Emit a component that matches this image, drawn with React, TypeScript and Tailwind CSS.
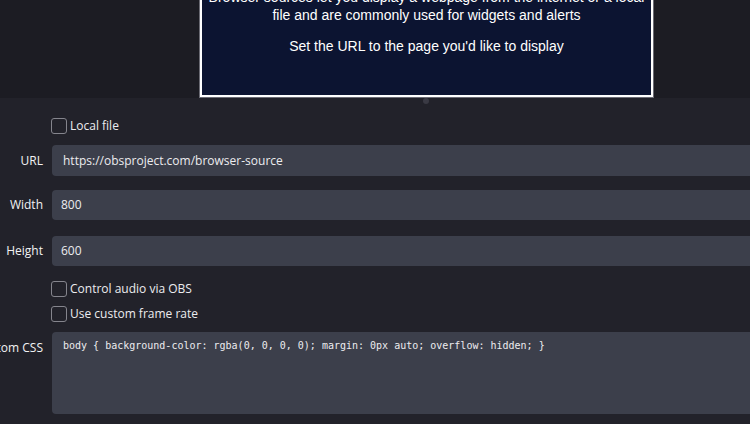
import React from "react";

const sans = { fontFamily: '"Open Sans", "Noto Sans", sans-serif' };

function Checkbox({ label }: { label: string }) {
  return (
    <label className="flex h-4 items-center gap-[3px] pl-[51px]">
      <span className="block h-4 w-4 rounded-[3px] border-[1.5px] border-[#85858d] bg-transparent" />
      <span className="text-[12px] leading-4 text-[#ececef]">{label}</span>
    </label>
  );
}

function Field({ label, value, className, pad }: { label: string; value: string; className: string; pad: string }) {
  return (
    <div className={`flex items-center ${className}`}>
      <div className="flex w-[43px] shrink-0 justify-end whitespace-nowrap text-[12px] text-[#f2f2f4]">{label}</div>
      <div className={`ml-[9px] -mr-4 flex h-full flex-1 items-center rounded-[4px] bg-[#3c3f4b] text-[12px] text-[#ececef] ${pad}`}>
        {value}
      </div>
    </div>
  );
}

export default function App() {
  return (
    <div className="h-[424px] w-[750px] overflow-hidden bg-[#22222a]" style={sans}>
      {/* preview area */}
      <div className="h-[98px] bg-[#1c1c23]">
        <div className="ml-[200px] h-[97px] w-[453px] overflow-hidden border-2 border-t-0 border-white bg-[#0c1431] shadow-[0_0_0_1px_#6b6b74]">
          <div
            className="-mt-[12px] whitespace-nowrap text-center text-[14px] leading-[18px] text-white"
            style={{ fontFamily: '"Liberation Sans", Arial, sans-serif' }}
          >
            <p>
              Browser sources let you display a webpage from the internet or a local
              <br />
              file and are commonly used for widgets and alerts
            </p>
            <p className="mt-[13px]">Set the URL to the page you'd like to display</p>
          </div>
        </div>
      </div>

      {/* splitter handle */}
      <div className="h-[6px]">
        <div className="ml-[423px] h-[6px] w-[6px] rounded-full bg-[#3a3a44]" />
      </div>

      {/* properties */}
      <div className="flex flex-col">
        <div className="mt-[14px]">
          <Checkbox label="Local file" />
        </div>
        <Field label="URL" value="https://obsproject.com/browser-source" className="mt-[11px] h-[31px]" pad="pl-[11px]" />
        <Field label="Width" value="800" className="mt-[14px] h-[30px]" pad="pl-[9px]" />
        <Field label="Height" value="600" className="mt-[16px] h-[30px]" pad="pl-[9px]" />
        <div className="mt-[15px]">
          <Checkbox label="Control audio via OBS" />
        </div>
        <div className="mt-[9px]">
          <Checkbox label="Use custom frame rate" />
        </div>
        <div className="mt-[10px] flex h-[82px] items-start">
          <div className="mt-[7px] flex w-[43px] shrink-0 justify-end whitespace-nowrap text-[12px] text-[#f2f2f4]">Custom CSS</div>
          <div
            className="ml-[9px] -mr-4 h-full flex-1 rounded-[4px] bg-[#3c3f4b] pl-[11px] pt-[7px] text-[10px] leading-[14px] text-[#ececef]"
            style={{ fontFamily: '"DejaVu Sans Mono", monospace' }}
          >
            body {"{"} background-color: rgba(0, 0, 0, 0); margin: 0px auto; overflow: hidden; {"}"}
          </div>
        </div>
      </div>
    </div>
  );
}
